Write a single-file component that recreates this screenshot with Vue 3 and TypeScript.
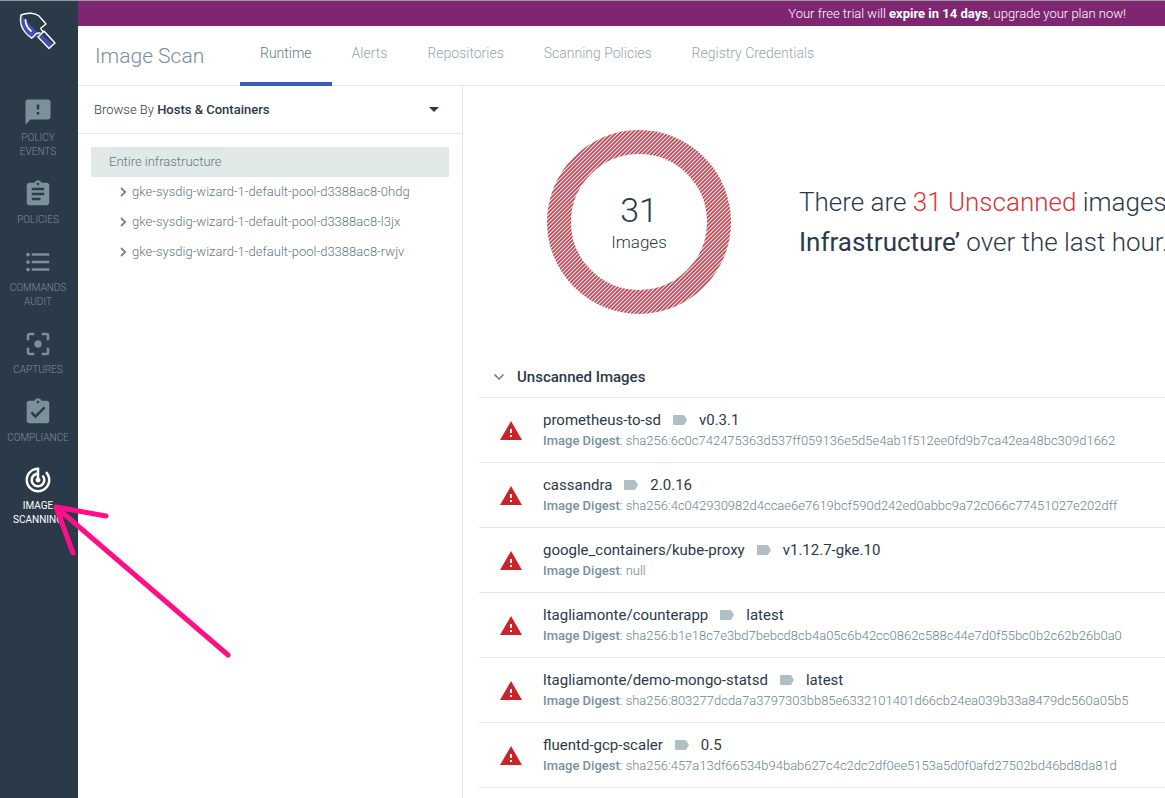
<script setup lang="ts">
import { ref } from 'vue'

interface NavItem {
  label: string
  path: string
}

interface ImageRow {
  name: string
  tag: string
  digest: string
}

const navItems: NavItem[] = [
  {
    label: 'Policy Events',
    path: 'M20 2H4c-1.100 0-1.990.9-1.990 2L2 22l4-4h14c1.100 0 2-.9 2-2V4c0-1.100-.9-2-2-2zm-7 12h-2v-2h2v2zm0-4h-2V6h2v4z',
  },
  {
    label: 'Policies',
    path: 'M19 3h-4.180C14.400 1.840 13.300 1 12 1c-1.300 0-2.400.84-2.820 2H5c-1.100 0-2 .9-2 2v14c0 1.100.9 2 2 2h14c1.100 0 2-.9 2-2V5c0-1.100-.9-2-2-2zm-7 0c.55 0 1 .45 1 1s-.45 1-1 1-1-.45-1-1 .45-1 1-1zm2 14H7v-2h7v2zm3-4H7v-2h10v2zm0-4H7V7h10v2z',
  },
  {
    label: 'Commands Audit',
    path: 'M4 10.500c-.83 0-1.500.67-1.500 1.500s.67 1.500 1.500 1.500 1.500-.67 1.500-1.500-.67-1.500-1.500-1.500zm0-6c-.83 0-1.500.67-1.500 1.500S3.170 7.500 4 7.500 5.500 6.830 5.500 6 4.830 4.500 4 4.500zm0 12c-.83 0-1.500.68-1.500 1.500s.68 1.500 1.500 1.500 1.500-.68 1.500-1.500-.67-1.500-1.500-1.500zM7 19h14v-2H7v2zm0-6h14v-2H7v2zm0-8v2h14V5H7z',
  },
  {
    label: 'Captures',
    path: 'M5 15H3v4c0 1.100.9 2 2 2h4v-2H5v-4zM5 5h4V3H5c-1.100 0-2 .9-2 2v4h2V5zm14-2h-4v2h4v4h2V5c0-1.100-.9-2-2-2zm0 16h-4v2h4c1.100 0 2-.9 2-2v-4h-2v4zM12 9c-1.660 0-3 1.340-3 3s1.340 3 3 3 3-1.340 3-3-1.340-3-3-3z',
  },
  {
    label: 'Compliance',
    path: 'M19 3h-4.180C14.400 1.840 13.300 1 12 1c-1.300 0-2.400.84-2.820 2H5c-1.100 0-2 .9-2 2v14c0 1.100.9 2 2 2h14c1.100 0 2-.9 2-2V5c0-1.100-.9-2-2-2zm-7 0c.55 0 1 .45 1 1s-.45 1-1 1-1-.45-1-1 .45-1 1-1zm-2 14l-4-4 1.410-1.410L10 14.170l6.590-6.590L18 9l-8 8z',
  },
  {
    label: 'Image Scanning',
    path: 'M19.070 4.930l-1.410 1.410C19.100 7.790 20 9.790 20 12c0 4.420-3.580 8-8 8s-8-3.580-8-8c0-4.080 3.050-7.440 7-7.930v2.020C8.160 6.570 6 9.030 6 12c0 3.310 2.690 6 6 6s6-2.690 6-6c0-1.660-.67-3.160-1.760-4.240l-1.410 1.410C15.550 9.900 16 10.900 16 12c0 2.210-1.790 4-4 4s-4-1.790-4-4c0-1.860 1.280-3.410 3-3.860v2.140c-.6.350-1 .98-1 1.720 0 1.100.9 2 2 2s2-.9 2-2c0-.74-.4-1.380-1-1.720V2h-1C6.480 2 2 6.480 2 12s4.480 10 10 10 10-4.480 10-10c0-2.760-1.120-5.260-2.930-7.070z',
  },
]

const tabs: string[] = ['Runtime', 'Alerts', 'Repositories', 'Scanning Policies', 'Registry Credentials']

const hosts: string[] = [
  'gke-sysdig-wizard-1-default-pool-d3388ac8-0hdg',
  'gke-sysdig-wizard-1-default-pool-d3388ac8-l3jx',
  'gke-sysdig-wizard-1-default-pool-d3388ac8-rwjv',
]

const images: ImageRow[] = [
  { name: 'prometheus-to-sd', tag: 'v0.3.1', digest: 'sha256:6c0c742475363d537ff059136e5d5e4ab1f512ee0fd9b7ca42ea48bc309d1662' },
  { name: 'cassandra', tag: '2.0.16', digest: 'sha256:4c042930982d4ccae6e7619bcf590d242ed0abbc9a72c066c77451027e202dff' },
  { name: 'google_containers/kube-proxy', tag: 'v1.12.7-gke.10', digest: 'null' },
  { name: 'ltagliamonte/counterapp', tag: 'latest', digest: 'sha256:b1e18c7e3bd7bebcd8cb4a05c6b42cc0862c588c44e7d0f55bc0b2c62b26b0a0' },
  { name: 'ltagliamonte/demo-mongo-statsd', tag: 'latest', digest: 'sha256:803277dcda7a3797303bb85e6332101401d66cb24ea039b33a8479dc560a05b5' },
  { name: 'fluentd-gcp-scaler', tag: '0.5', digest: 'sha256:457a13df66534b94bab627c4c2dc2df0ee5153a5d0f0afd27502bd46bd8da81d' },
]

const activeNav = ref('Image Scanning')
const activeTab = ref('Runtime')
const unscannedOpen = ref(true)
</script>

<template>
  <div class="app">
    <aside class="sidebar">
      <a class="logo" href="#" aria-label="Home">
        <svg viewBox="0 0 48 46" width="48" height="46" aria-hidden="true">
          <path d="M7 7l16 18-5 5C10 24 5 17 7 7z" fill="#4350af" />
          <path d="M7 7l19 20 4-4 11 12-6 5-11-11-6 1z" fill="#4350af" />
          <path d="M9 7l17 17 3-2-2-2 5-4-8-8C19 5 14 5 9 7z" fill="#2b3a49" />
          <path d="M30 25l9 10-1 1-10-10z" fill="#2b3a49" />
          <g fill="none" stroke="#fff" stroke-width="1.400" stroke-linejoin="round" stroke-linecap="round">
            <path d="M26 25l-3.300.3-5 5C9 24 5 16 7 7c7-3 14-2 18 1l7 8-5.300 4.300L29 24" />
            <path d="M11.500 12c0 5 2 8 5.500 11" stroke-width="1.800" />
            <path d="M30 23l11 12-6 5.500L24 29z" />
          </g>
        </svg>
      </a>
      <nav class="nav" aria-label="Primary">
        <button
          v-for="item in navItems"
          :key="item.label"
          type="button"
          class="nav-item"
          :class="{ active: item.label === activeNav }"
          @click="activeNav = item.label"
        >
          <svg viewBox="0 0 24 24" width="30" height="30" aria-hidden="true"><path :d="item.path" /></svg>
          <span class="nav-label">{{ item.label }}</span>
        </button>
      </nav>
    </aside>

    <div class="content">
      <div class="trial">
        <p>Your free trial will <strong>expire in 14 days</strong>, upgrade your plan now!</p>
      </div>

      <header class="header">
        <h1>Image Scan</h1>
        <nav class="tabs" aria-label="Image scan sections">
          <a
            v-for="tab in tabs"
            :key="tab"
            href="#"
            class="tab"
            :class="{ active: tab === activeTab }"
            @click.prevent="activeTab = tab"
          >{{ tab }}</a>
        </nav>
      </header>

      <div class="body">
        <section class="browser">
          <button type="button" class="browse-by">
            <span>Browse By <strong>Hosts &amp; Containers</strong></span>
            <svg viewBox="0 0 10 5" width="10" height="5" aria-hidden="true"><path d="M0 0h10L5 5z" fill="#2b3a49" /></svg>
          </button>
          <ul class="tree">
            <li><button type="button" class="tree-root">Entire infrastructure</button></li>
            <li v-for="host in hosts" :key="host">
              <button type="button" class="tree-node">
                <svg viewBox="0 0 8 10" width="8" height="10" aria-hidden="true">
                  <path d="M2 1l4.200 4L2 9" fill="none" stroke="#6f858f" stroke-width="1.800" />
                </svg>
                <span>{{ host }}</span>
              </button>
            </li>
          </ul>
        </section>

        <main class="main">
          <div class="summary">
            <div class="donut">
              <svg class="ring" viewBox="0 0 184 184" aria-hidden="true">
                <defs>
                  <pattern id="hatch" width="4" height="4" patternUnits="userSpaceOnUse">
                    <path d="M-1 1l2-2M0 4l4-4M3 5l2-2" stroke="#e0384a" stroke-width="1.800" />
                  </pattern>
                </defs>
                <circle cx="92" cy="92" r="80" fill="none" stroke="url(#hatch)" stroke-width="24" />
              </svg>
              <div class="donut-text">
                <span class="count">31</span>
                <span class="unit">Images</span>
              </div>
            </div>
            <p class="headline">
              There are <span class="alert">31 Unscanned</span> images<br />
              <b>Infrastructure’</b> over the last hour.
            </p>
          </div>

          <section class="unscanned">
            <h2>
              <button type="button" class="section-toggle" :aria-expanded="unscannedOpen" @click="unscannedOpen = !unscannedOpen">
                <svg viewBox="0 0 12 8" width="12" height="8" aria-hidden="true">
                  <path d="M1.500 1.500L6 6l4.500-4.500" fill="none" stroke="#5f7883" stroke-width="1.500" />
                </svg>
                <span>Unscanned Images</span>
              </button>
            </h2>
            <ul v-if="unscannedOpen" class="images">
              <li v-for="image in images" :key="image.name" class="image-row">
                <svg class="warning" viewBox="0 0 22 19" width="22" height="19" aria-hidden="true">
                  <path d="M11 0l11 19H0z" fill="#cc2329" />
                  <path d="M10 8h2v4h-2zM10 14h2v2h-2z" fill="#fff" />
                </svg>
                <div class="image-info">
                  <div class="image-title">
                    <span>{{ image.name }}</span>
                    <svg viewBox="0 0 14 10" width="14" height="10" aria-hidden="true">
                      <path d="M1 0h9q.8 0 1.300.6L14 5l-2.700 4.400q-.5.600-1.300.6H1q-1 0-1-1V1q0-1 1-1z" fill="#b0bfc3" />
                    </svg>
                    <span>{{ image.tag }}</span>
                  </div>
                  <div class="digest"><b>Image Digest</b>: {{ image.digest }}</div>
                </div>
              </li>
            </ul>
          </section>
        </main>
      </div>
    </div>

    <svg class="pointer" viewBox="0 0 190 160" width="190" height="160" aria-hidden="true">
      <path d="M183 155L11 7M61 16L11 7l17 46" fill="none" stroke="#ff0f87" stroke-width="5" stroke-linecap="round" stroke-linejoin="round" />
    </svg>
  </div>
</template>

<style>
body {
  margin: 0;
}
</style>

<style scoped>
.app {
  position: relative;
  display: flex;
  box-sizing: border-box;
  height: 100vh;
  border-top: 1px solid #999;
  overflow: hidden;
  background: #fff;
  color: #2b3a49;
  font-family: Roboto, "Liberation Sans", sans-serif;
  font-size: 13px;
  font-weight: 300;
}

button {
  margin: 0;
  padding: 0;
  border: 0;
  background: none;
  color: inherit;
  font: inherit;
  text-align: left;
  cursor: pointer;
}

ul {
  margin: 0;
  padding: 0;
  list-style: none;
}

.sidebar {
  flex: none;
  display: flex;
  flex-direction: column;
  align-items: center;
  gap: 33px;
  box-sizing: border-box;
  width: 78px;
  padding: 7px 2px 0 0;
  background: #2b3a49;
}

.logo,
.logo svg {
  display: block;
}

.nav {
  display: flex;
  flex-direction: column;
  width: 100%;
}

.nav-item {
  display: flex;
  flex-direction: column;
  align-items: center;
  gap: 4px;
  padding: 10px 0;
  color: #7d8f99;
  font-size: 10px;
  font-weight: 300;
  line-height: 14px;
  text-align: center;
  text-transform: uppercase;
}

.nav-item svg {
  fill: currentColor;
}

.nav-label {
  max-width: 64px;
}

.nav-item.active {
  color: #fff;
  font-weight: 400;
}

.content {
  flex: 1;
  min-width: 0;
  display: flex;
  flex-direction: column;
}

.trial {
  padding-right: 39px;
  background: #7f2673;
  color: #fff;
  line-height: 25px;
  text-align: right;
}

.trial p {
  margin: 0;
}

.trial strong {
  font-weight: 700;
}

.header {
  display: flex;
  align-items: stretch;
  height: 59px;
  padding-left: 17px;
  border-bottom: 1px solid #e1e9e8;
}

h1 {
  margin: 0;
  width: 145px;
  color: #78909c;
  font-size: 21px;
  font-weight: 300;
  line-height: 60px;
}

.tabs {
  display: flex;
}

.tab {
  margin-bottom: -1px;
  padding: 0 20px;
  border-bottom: 4px solid transparent;
  color: #94a6ae;
  font-size: 14px;
  line-height: 54px;
  text-decoration: none;
  white-space: nowrap;
}

.tab.active {
  border-color: #3b5bb5;
  color: #5f7883;
}

.body {
  flex: 1;
  min-height: 0;
  display: flex;
}

.browser {
  flex: none;
  width: 384px;
  border-right: 1px solid #e1e9e8;
}

.browse-by {
  display: flex;
  align-items: center;
  justify-content: space-between;
  width: 100%;
  height: 48px;
  padding: 0 23px 0 16px;
  border-bottom: 1px solid #e1e9e8;
}

.browse-by strong {
  font-weight: 500;
}

.tree {
  padding: 13px;
  color: #5f7883;
  line-height: 30px;
}

.tree-root {
  width: 100%;
  padding-left: 18px;
  background: #e1e9e8;
}

.tree-node {
  display: flex;
  align-items: center;
  gap: 5px;
  padding-left: 28px;
}

.main {
  flex: 1;
  min-width: 0;
  padding-left: 16px;
  overflow: hidden;
}

.summary {
  display: flex;
  align-items: center;
  gap: 68px;
  padding: 44px 0 43px 68px;
}

.donut {
  flex: none;
  display: grid;
  place-items: center;
  width: 184px;
  height: 184px;
}

.ring,
.donut-text {
  grid-area: 1 / 1;
}

.donut-text {
  display: flex;
  flex-direction: column;
  align-items: center;
}

.count {
  font-size: 34px;
  line-height: 40px;
}

.unit {
  font-size: 17px;
  line-height: 24px;
}

.headline {
  margin: 0;
  font-size: 26px;
  line-height: 40px;
  white-space: nowrap;
}

.headline .alert {
  color: #dc3236;
}

.headline b {
  font-weight: 400;
}

h2 {
  margin: 0;
  border-bottom: 1px solid #e1e9e8;
  font-size: 15px;
  font-weight: 500;
}

.section-toggle {
  display: flex;
  align-items: center;
  gap: 12px;
  width: 100%;
  padding-left: 14px;
  line-height: 40px;
}

.image-row {
  display: flex;
  align-items: center;
  gap: 21px;
  height: 64px;
  padding-left: 21px;
  border-bottom: 1px solid #e1e9e8;
}

.warning {
  flex: none;
}

.image-info {
  white-space: nowrap;
}

.image-title {
  display: flex;
  align-items: center;
  gap: 12px;
  font-size: 15px;
  font-weight: 400;
  line-height: 22px;
}

.digest {
  color: #6b838f;
  line-height: 20px;
}

.digest b {
  color: #78909c;
  font-weight: 500;
}

.pointer {
  position: absolute;
  top: 499px;
  left: 45px;
  pointer-events: none;
}
</style>
